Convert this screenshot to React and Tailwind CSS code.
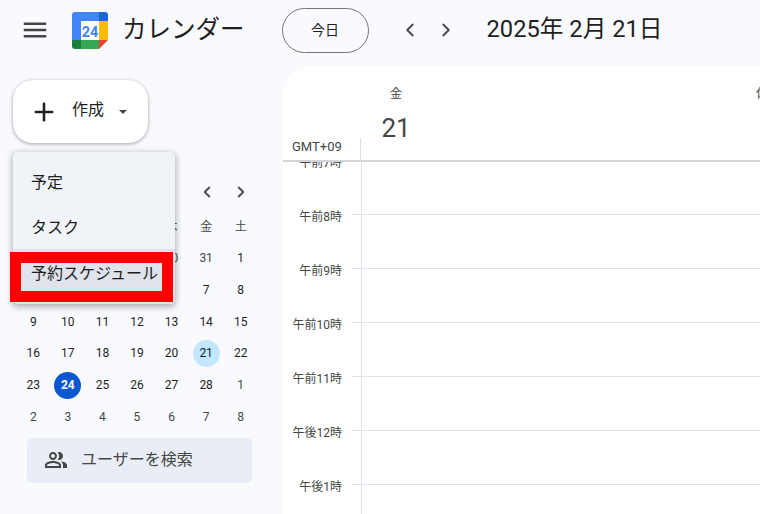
import React from 'react';
import { ChevronLeft, ChevronRight, Plus } from 'lucide-react';
import { MdMenu, MdOutlinePeopleAlt } from 'react-icons/md';

const fontStack = 'font-["Roboto","Noto_Sans_CJK_JP",sans-serif]';

const weekDays = ['日', '月', '火', '水', '木', '金', '土'];
const weeks = [
    [26, 27, 28, 29, 30, 31, 1],
    [2, 3, 4, 5, 6, 7, 8],
    [9, 10, 11, 12, 13, 14, 15],
    [16, 17, 18, 19, 20, 21, 22],
    [23, 24, 25, 26, 27, 28, 1],
    [2, 3, 4, 5, 6, 7, 8],
];
const hours = ['午前7時', '午前8時', '午前9時', '午前10時', '午前11時', '午後12時', '午後1時'];

function Logo() {
    return (
        <svg width="36" height="37" viewBox="0 0 36 37" className="shrink-0">
            <path d="M3 0H27V9H9V28H0V3A3 3 0 0 1 3 0Z" fill="#4285f4" />
            <path d="M27 0H33A3 3 0 0 1 36 3V9H27Z" fill="#1967d2" />
            <rect x="27" y="9" width="9" height="19" fill="#fbbc04" />
            <path d="M9 28H27V37H9Z" fill="#34a853" />
            <path d="M0 28H9V37H3A3 3 0 0 1 0 34Z" fill="#188038" />
            <path d="M27 28H36L27 37Z" fill="#ea4335" />
            <rect x="9" y="9" width="18" height="19" fill="#ffffff" />
            <text x="18" y="24.5" textAnchor="middle" fontSize="14.5" fontWeight="700" fill="#4285f4" fontFamily="Roboto, sans-serif">24</text>
        </svg>
    );
}

function Header() {
    return (
        <header className="flex h-[66px] shrink-0 items-center pb-[6px]">
            <MdMenu size={30} className="ml-[20px] text-[#444746]" />
            <div className="ml-[22px]"><Logo /></div>
            <span className="ml-[14px] text-[24.5px] leading-none whitespace-nowrap text-[#1f1f1f]">カレンダー</span>
            <button className="ml-[37px] flex h-[45px] w-[87px] items-center justify-center rounded-full border border-[#747775] text-sm text-[#1f1f1f]">今日</button>
            <ChevronLeft size={22} strokeWidth={2} className="ml-[30px] text-[#444746]" />
            <ChevronRight size={22} strokeWidth={2} className="ml-[14px] text-[#444746]" />
            <span className="ml-[30px] text-[23.7px] leading-none whitespace-nowrap text-[#1f1f1f]">2025年 2月 21日</span>
        </header>
    );
}

function MiniCalendar() {
    return (
        <div className="ml-[16px] w-[242px]">
            <div className="flex h-[37px] items-center justify-end gap-[16px] pr-[8px] pb-[1px]">
                <ChevronLeft size={18} strokeWidth={2.4} className="text-[#444746]" />
                <ChevronRight size={18} strokeWidth={2.4} className="text-[#444746]" />
            </div>
            <div className="grid grid-cols-7 auto-rows-[31.67px] text-xs text-[#1f1f1f]">
                {weekDays.map((d) => (
                    <div key={d} className="flex items-center justify-center text-[#444746]">{d}</div>
                ))}
                {weeks.flatMap((week, w) =>
                    week.map((day, i) => {
                        const outside = (w === 0 && day > 20) || w === 5 || (w === 4 && day === 1);
                        const selected = w === 3 && day === 21;
                        const today = w === 4 && day === 24;
                        return (
                            <div key={`${w}-${i}`} className="flex items-center justify-center">
                                <span className={`flex h-[27px] w-[27px] items-center justify-center rounded-full ${
                                    today ? 'bg-[#0b57d0] font-bold text-white' : selected ? 'bg-[#c2e7ff] text-[#001d35]' : outside ? 'text-[#444746]' : 'text-[#1f1f1f]'
                                }`}>
                                    {day}
                                </span>
                            </div>
                        );
                    })
                )}
            </div>
        </div>
    );
}

function Sidebar() {
    return (
        <aside className="relative w-[283px] shrink-0">
            <button className="mt-[14px] ml-[13px] flex h-[63px] w-[135px] items-center rounded-[20px] bg-white shadow-[0_1px_3px_1px_rgba(60,64,67,0.3)]">
                <Plus size={28} strokeWidth={2.2} className="ml-[17px] text-[#1f1f1f]" />
                <span className="ml-[14px] pb-[3px] text-base leading-6 text-[#1f1f1f]">作成</span>
                <span className="ml-[15px] h-0 w-0 border-x-[4px] border-t-[4px] border-x-transparent border-t-[#444746]" />
            </button>
            <div className="mt-[31px]"><MiniCalendar /></div>
            <div className="mt-[5px] ml-[27px] flex h-[45px] w-[225px] items-center rounded-[5px] bg-[#e9eef6] text-base text-[#444746]">
                <MdOutlinePeopleAlt size={24} className="ml-[17px]" />
                <span className="ml-[13px]">ユーザーを検索</span>
            </div>

            {/* popup menu over the calendar */}
            <div className="absolute top-[86px] left-[13px] w-[162px] rounded-[5px] bg-[#f0f4f9] text-base text-[#1f1f1f] shadow-[0_2px_6px_1px_rgba(60,64,67,0.4)]">
                <div className="flex h-[53px] items-center pt-[9px] pl-[18px]">予定</div>
                <div className="flex h-[44px] items-center pt-[2px] pl-[18px]">タスク</div>
                <div className="flex h-[55px] items-center rounded-b-[5px] bg-[#dfe3eb] pb-[6px] pl-[18px] whitespace-nowrap">予約スケジュール</div>
            </div>
            <div className="absolute top-[186px] left-[10px] h-[50px] w-[163px] border-[11px] border-[#ff0000]" />
        </aside>
    );
}

function DayGrid() {
    return (
        <main className="flex min-w-0 flex-1 flex-col overflow-hidden rounded-tl-[28px] bg-white">
            <div className="relative z-10 flex h-[96px] shrink-0 border-b-2 border-[#d3d5d9] bg-white">
                <div className="flex w-[77px] shrink-0 items-end">
                    <span className="mb-[5px] ml-[9px] text-[13px] leading-4 text-[#444746]">GMT+09</span>
                </div>
                <div className="mt-[72px] h-[23px] w-px shrink-0 bg-[#dde3ea]" />
                <div className="flex w-[70px] shrink-0 flex-col items-center">
                    <span className="mt-[20px] text-xs leading-4 text-[#444746]">金</span>
                    <span className="mt-[9px] text-[26px] leading-[34px] text-[#444746]">21</span>
                </div>
                <span className="mt-[20px] ml-[325px] shrink-0 text-xs leading-4 whitespace-nowrap text-[#444746]">休</span>
            </div>
            <div className="min-h-0 flex-1 overflow-hidden">
                {hours.map((h, i) => (
                    <div key={h} className={`flex h-[54px] ${i === 0 ? '-mt-[2px]' : ''}`}>
                        <div className="w-[69px] shrink-0 pr-[10px] text-right">
                            <span className="relative -top-[5px] block text-xs leading-4 whitespace-nowrap text-[#444746]">{h}</span>
                        </div>
                        <div className="w-[9px] shrink-0 border-t border-[#dde3ea]" />
                        <div className="flex-1 border-t border-l border-[#dde3ea]" />
                    </div>
                ))}
            </div>
        </main>
    );
}

export default function App() {
    return (
        <div className={`flex h-[514px] w-[760px] flex-col overflow-hidden bg-[#f9fafe] ${fontStack}`}>
            <Header />
            <div className="flex min-h-0 flex-1">
                <Sidebar />
                <DayGrid />
            </div>
        </div>
    );
}
